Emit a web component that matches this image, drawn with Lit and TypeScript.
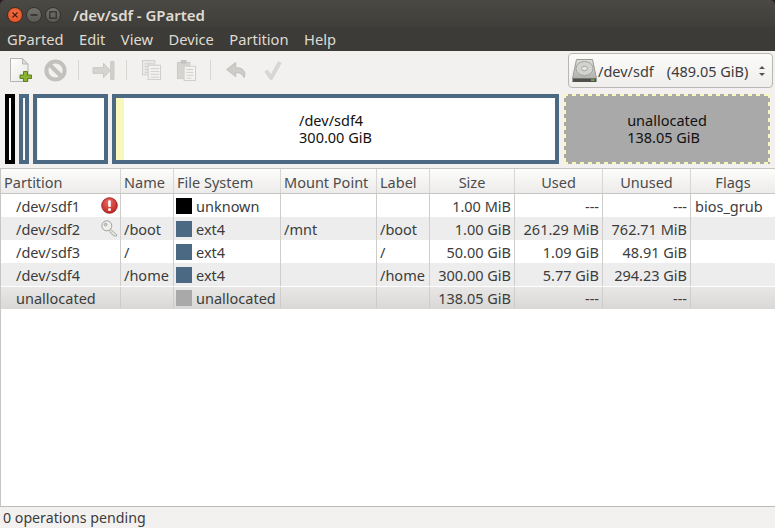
import { LitElement, html, css, svg } from "lit";
import { customElement } from "lit/decorators.js";

interface Col { label: string; align: "l" | "c" }
const COLS: Col[] = [
  { label: "Partition", align: "l" },
  { label: "Name", align: "l" },
  { label: "File System", align: "l" },
  { label: "Mount Point", align: "l" },
  { label: "Label", align: "l" },
  { label: "Size", align: "c" },
  { label: "Used", align: "c" },
  { label: "Unused", align: "c" },
  { label: "Flags", align: "c" },
];

const ROWS = [
  { p: "/dev/sdf1", icon: "warn", name: "", sw: "#000000", fs: "unknown", mp: "", label: "", size: "1.00 MiB", used: "---", unused: "---", flags: "bios_grub" },
  { p: "/dev/sdf2", icon: "key", name: "/boot", sw: "#4b6983", fs: "ext4", mp: "/mnt", label: "/boot", size: "1.00 GiB", used: "261.29 MiB", unused: "762.71 MiB", flags: "" },
  { p: "/dev/sdf3", icon: "", name: "/", sw: "#4b6983", fs: "ext4", mp: "", label: "/", size: "50.00 GiB", used: "1.09 GiB", unused: "48.91 GiB", flags: "" },
  { p: "/dev/sdf4", icon: "", name: "/home", sw: "#4b6983", fs: "ext4", mp: "", label: "/home", size: "300.00 GiB", used: "5.77 GiB", unused: "294.23 GiB", flags: "" },
  { p: "unallocated", icon: "", name: "", sw: "#a9a9a9", fs: "unallocated", mp: "", label: "", size: "138.05 GiB", used: "---", unused: "---", flags: "" },
];

const MENUS = ["GParted", "Edit", "View", "Device", "Partition", "Help"];

const iconNew = svg`<svg width="22" height="24" viewBox="0 0 22 24"><defs><linearGradient id="pg" x1="0" y1="0" x2="1" y2="1"><stop offset="0" stop-color="#ffffff"/><stop offset="1" stop-color="#e6e6e3"/></linearGradient></defs><path d="M.5.5h12l5.500 5.500v17.500H.5z" fill="url(#pg)" stroke="#b4b4b0"/><path d="M12.500.5v5.500H18z" fill="#d8d8d5" stroke="#b9b9b5"/><path d="M13.500 13.500h4v3.500h4v3.500h-4v3h-4v-3h-3.500v-3.500h3.500z" fill="#8ab234" stroke="#5d7f1c"/></svg>`;
const iconStop = svg`<svg width="23" height="23" viewBox="0 0 24 24"><circle cx="12" cy="12" r="9.500" fill="none" stroke="#c3c1be" stroke-width="4.200"/><path d="M5.500 5.500l13 13" stroke="#c3c1be" stroke-width="4.500"/></svg>`;
const iconApplyTo = svg`<svg width="23" height="21" viewBox="0 0 24 22"><path d="M1 8h11V3.500l7 7.500-7 7.500V14H1z" fill="#d6d4d1" stroke="#c8c6c3" stroke-linejoin="round"/><rect x="19.500" y="1.500" width="3.500" height="19" rx=".5" fill="#d2d0cd" stroke="#c8c6c3"/></svg>`;
const docLines = (x: number, y: number) => svg`<path d="M${x} ${y}h9M${x} ${y + 3}h9M${x} ${y + 6}h9M${x} ${y + 9}h9" stroke="#d0cecb"/>`;
const iconCopy = svg`<svg width="21" height="22" viewBox="0 0 22 23"><rect x="1.500" y="1.500" width="13" height="15" fill="#e9e8e6" stroke="#d0cecb"/>${docLines(4, 5)}<rect x="7.500" y="6.500" width="13" height="15" fill="#f3f2f1" stroke="#cfcdca"/>${docLines(10, 10)}</svg>`;
const iconPaste = svg`<svg width="21" height="23" viewBox="0 0 22 24"><rect x="1.500" y="3.500" width="13" height="17" fill="#d6d4d1" stroke="#cbc9c6"/><rect x="5" y="1" width="6" height="4" fill="#c6c4c1"/><rect x="8.500" y="7.500" width="12" height="15" fill="#f3f2f1" stroke="#cfcdca"/><path d="M11 11h7M11 14h7M11 17h7M11 20h5" stroke="#d0cecb"/></svg>`;
const iconUndo = svg`<svg width="23" height="19" viewBox="0 0 24 20"><path d="M11 2L2 9l9 7v-4c4 0 7 1 9 5 2-5-1-10-9-10z" fill="#cfcdca" stroke="#c6c4c1" stroke-width="1.500" stroke-linejoin="round"/></svg>`;
const iconCheck = svg`<svg width="20" height="22" viewBox="0 0 20 22"><path d="M3 11.500l5 7.500L17 3" fill="none" stroke="#d8d6d3" stroke-width="4" stroke-linejoin="round"/></svg>`;
const iconDisk = svg`<svg width="25" height="25" viewBox="0 0 25 25"><defs><linearGradient id="dk" x1="0" y1="0" x2="0" y2="1"><stop offset="0" stop-color="#dcdcd9"/><stop offset="1" stop-color="#b0b0ad"/></linearGradient></defs><path d="M4.500 1.500h16l4 19H.5z" fill="url(#dk)" stroke="#9a9a97"/><ellipse cx="12.500" cy="10.500" rx="8.500" ry="7" fill="#d2d2cf" stroke="#a3a3a0"/><ellipse cx="12.500" cy="10.500" rx="3" ry="2.300" fill="#e4e4e1" stroke="#a5a5a2"/><path d="M.5 20.500h24v3.500H.5z" fill="#4f4f4c"/><rect x="19" y="21.500" width="3.500" height="1.200" fill="#8fce4d"/></svg>`;
const iconWarn = svg`<svg width="17" height="17" viewBox="0 0 17 17"><defs><radialGradient id="wr" cx=".45" cy=".3" r=".8"><stop offset="0" stop-color="#ee6a60"/><stop offset="1" stop-color="#b81c1c"/></radialGradient></defs><circle cx="8.500" cy="8.500" r="7.800" fill="url(#wr)" stroke="#8f1414" stroke-width=".8"/><rect x="7.200" y="3.200" width="2.600" height="6.800" rx="1" fill="#fff"/><circle cx="8.500" cy="12.500" r="1.500" fill="#fff"/></svg>`;
const iconKey = svg`<svg width="17" height="17" viewBox="0 0 17 17"><path d="M8 8l7.500 6.500v1.500h-2.500l-1-1.200-1-.2-.3-1.300-1.200-.3-.2-1.300L7.500 10z" fill="#e6e6e3" stroke="#a0a09c" stroke-width=".9" stroke-linejoin="round"/><circle cx="5.800" cy="5.800" r="5" fill="#efefec" stroke="#a0a09c"/><circle cx="4.600" cy="4.600" r="1.500" fill="#c4c4c0" stroke="#a0a09c" stroke-width=".6"/></svg>`;

const TOOLS: ([unknown, number] | null)[] = [
  [iconNew, 34],
  [iconStop, 34],
  null,
  [iconApplyTo, 34],
  null,
  [iconCopy, 34],
  [iconPaste, 36],
  null,
  [iconUndo, 36],
  [iconCheck, 38],
];

@customElement("app-root")
export class AppRoot extends LitElement {
  static styles = css`
    :host {
      display: flex;
      flex-direction: column;
      width: 775px;
      height: 528px;
      overflow: hidden;
      background: #f2f1f0;
      color: #3c3c3c;
      font-family: "Noto Sans", sans-serif;
      font-size: 14.5px;
      --blue: #4b6983;
      --line: #c8c6c2;
    }
    .corners { background: #2c1a26; flex: none; }
    .titlebar {
      height: 27px;
      display: flex;
      align-items: center;
      background: linear-gradient(#4a4944, #3f3e3a);
      border-radius: 5px 5px 0 0;
      color: #dfdbd2;
      padding: 3px 0 0 7px;
      box-sizing: border-box;
    }
    .wbtn {
      width: 16px; height: 16px; border-radius: 50%;
      margin-right: 3px;
      display: flex; align-items: center; justify-content: center;
      box-sizing: border-box;
      background: linear-gradient(#72716c, #5a5953);
      border: 1px solid #34332f;
    }
    .wbtn.close { background: radial-gradient(circle at 50% 40%, #f0744a, #e0481c); border-color: #4a2a1e; }
    .title {
      margin-left: 9px;
      font-weight: 600;
      font-size: 15px;
      letter-spacing: -0.05px;
    }
    .menubar {
      height: 24px;
      flex: none;
      display: flex;
      align-items: center;
      background: #3c3b37;
      color: #dfdbd2;
      padding-left: 7px;
      gap: 15.5px;
      box-sizing: border-box;
      font-size: 14.7px;
    }
    .toolbar {
      height: 38px;
      flex: none;
      display: flex;
      align-items: center;
      padding: 0 2px 0 4px;
      box-sizing: border-box;
    }
    .tool { display: flex; justify-content: center; align-items: center; flex: none; }
    .tsep { width: 1px; height: 20px; background: #d9d7d4; margin: 0 7px 0 6px; flex: none; }
    .spacer { flex: 1; }
    .combo {
      width: 205px; height: 35px;
      box-sizing: border-box;
      margin-top: 1px;
      border: 1px solid #b9b7b3;
      border-radius: 4px;
      background: linear-gradient(#fbfbfa, #efeeec);
      display: flex; align-items: center;
      padding: 0 6px 0 3px;
      color: #3c3c3c;
    }
    .combo .txt { flex: 1; margin-left: 1px; display: flex; gap: 13px; }
    .arrows { display: flex; }
    .visual {
      height: 70px;
      flex: none;
      margin-top: 5px;
      padding: 0 5px;
      display: flex;
      gap: 4px;
    }
    .seg {
      box-sizing: border-box;
      border: 4px solid var(--blue);
      background: #fff;
      display: flex;
      height: 70px;
      flex: none;
      position: relative;
    }
    .seg .used { background: #f8f8ba; height: 100%; position: absolute; left: 0; top: 0; }
    .seg .rest { flex: 1; display: flex; align-items: center; justify-content: center; color: #111; line-height: 17px; }
    .seg.black { border-color: #000; }
    .seg.unalloc {
      border: none;
      margin-left: 1px;
      background:
        repeating-linear-gradient(90deg, #f8f8ba 0 4px, transparent 4px 8px) top / 100% 2px no-repeat,
        repeating-linear-gradient(90deg, #f8f8ba 0 4px, transparent 4px 8px) bottom / 100% 2px no-repeat,
        repeating-linear-gradient(180deg, #f8f8ba 0 4px, transparent 4px 8px) left / 2px 100% no-repeat,
        repeating-linear-gradient(180deg, #f8f8ba 0 4px, transparent 4px 8px) right / 2px 100% no-repeat,
        #a9a9a9;
    }
    .table {
      flex: 1;
      margin-top: 4px;
      border-top: 1px solid var(--line);
      border-bottom: 1px solid #bdbbb7;
      border-left: 1px solid var(--line);
      background: #fff;
      display: flex;
      flex-direction: column;
      min-height: 0;
    }
    .row { display: grid; grid-template-columns: 120px 53px 107px 96px 53px 85px 88px 88px 1fr; flex: none; }
    .head {
      height: 24px;
      background: linear-gradient(#fdfdfc, #ecebe9);
      border-bottom: 1px solid var(--line);
      color: #4c4c4c;
    }
    .head .cell { border-right: 1px solid #d8d6d2; padding-top: 1px; }
    .head .cell.c { justify-content: center; }
    .cell {
      min-width: 0;
      box-sizing: border-box;
      display: flex;
      align-items: center;
      white-space: nowrap;
      padding: 1px 3px 0;
      border-right: 1px solid #cfcdc9;
    }
    .cell:last-child { border-right: none; }
    .body-row { height: 23px; background: #fff; }
    .body-row.alt { background: #ededed; }
    .body-row.sel { height: 22px; background: linear-gradient(#e8e7e5, #d9d8d6); margin-top: 1px; }
    .body-row.sel .cell { padding-top: 0; }
    .cell.r { justify-content: flex-end; }
    .cell.p { padding-left: 15px; justify-content: space-between; padding-right: 2px; padding-top: 0; }
    .cell.fs { padding-left: 2px; gap: 4px; }
    .cell.fl { padding-left: 4px; }
    .swatch { width: 16px; height: 16px; flex: none; }
    .filler { flex: 1; background: #fff; }
    .status {
      height: 21px;
      flex: none;
      display: flex;
      align-items: center;
      padding-left: 3px;
      font-size: 14.2px;
    }
  `;

  private segment(w: number, used: number, cls = "", lines: string[] = []) {
    return html`<div class="seg ${cls}" style="width:${w}px">
      ${used ? html`<div class="used" style="width:${used}px"></div>` : ""}
      <div class="rest"><div>${lines.map((l) => html`<div>${l}</div>`)}</div></div>
    </div>`;
  }

  render() {
    return html`
      <div class="corners">
        <div class="titlebar">
          <div class="wbtn close"><svg width="8" height="8" viewBox="0 0 8 8"><path d="M1.500 1.500l5 5M6.500 1.500l-5 5" stroke="#4a1d0d" stroke-width="1.200"/></svg></div>
          <div class="wbtn"><svg width="8" height="8" viewBox="0 0 8 8"><path d="M.5 4h7" stroke="#2f2e2b" stroke-width="1.500"/></svg></div>
          <div class="wbtn"><svg width="8" height="8" viewBox="0 0 8 8"><rect x=".8" y=".8" width="6.400" height="6.400" fill="none" stroke="#2f2e2b" stroke-width="1.200"/></svg></div>
          <div class="title">/dev/sdf - GParted</div>
        </div>
      </div>
      <div class="menubar">${MENUS.map((m) => html`<span>${m}</span>`)}</div>
      <div class="toolbar">
        ${TOOLS.map((t) => (t ? html`<div class="tool" style="width:${t[1]}px">${t[0]}</div>` : html`<div class="tsep"></div>`))}
        <div class="spacer"></div>
        <div class="combo">
          ${iconDisk}
          <span class="txt"><span>/dev/sdf</span><span>(489.05 GiB)</span></span>
          <span class="arrows"><svg width="8" height="16" viewBox="0 0 8 16"><path d="M1 6l3-3 3 3z M1 10l3 3 3-3z" fill="#55534f"/></svg></span>
        </div>
      </div>
      <div class="visual">
        ${this.segment(10, 0, "black")}
        ${this.segment(10, 1)}
        ${this.segment(75, 1)}
        ${this.segment(447, 8, "", ["/dev/sdf4", "300.00 GiB"])}
        ${this.segment(206, 0, "unalloc", ["unallocated", "138.05 GiB"])}
      </div>
      <div class="table">
        <div class="row head">
          ${COLS.map((c) => html`<div class="cell ${c.align === "c" ? "c" : ""}">${c.label}</div>`)}
        </div>
        ${ROWS.map((r, i) => html`
          <div class="row body-row ${i === 4 ? "sel" : i % 2 ? "alt" : ""}">
            <div class="cell p"><span>${r.p}</span>${r.icon === "warn" ? iconWarn : r.icon === "key" ? iconKey : ""}</div>
            <div class="cell">${r.name}</div>
            <div class="cell fs"><span class="swatch" style="background:${r.sw}"></span>${r.fs}</div>
            <div class="cell">${r.mp}</div>
            <div class="cell">${r.label}</div>
            <div class="cell r">${r.size}</div>
            <div class="cell r">${r.used}</div>
            <div class="cell r">${r.unused}</div>
            <div class="cell fl">${r.flags}</div>
          </div>`)}
        <div class="filler"></div>
      </div>
      <div class="status">0 operations pending</div>
    `;
  }
}
